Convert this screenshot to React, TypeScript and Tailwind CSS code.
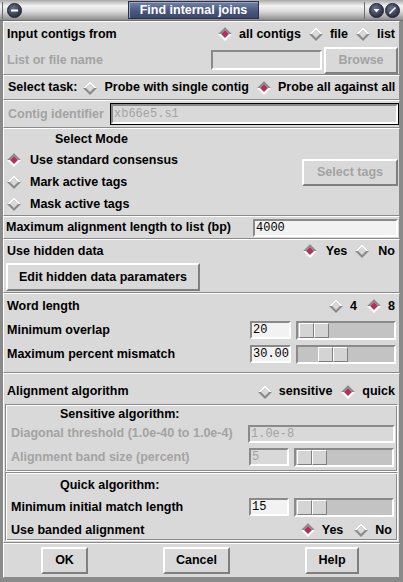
import React from "react";

const raised = "border border-t-white border-l-white border-b-[#8a8a8a] border-r-[#8a8a8a]";
const groove = "border border-t-[#8a8a8a] border-l-[#8a8a8a] border-b-white border-r-white shadow-[inset_1px_1px_0_#fff,inset_-1px_-1px_0_#8a8a8a]";
const sunken = "border-2 border-t-[#8a8a8a] border-l-[#8a8a8a] border-b-white border-r-white";
const btnRaised = "border-2 border-t-white border-l-white border-b-[#7f7f7f] border-r-[#7f7f7f]";

function Diamond({ on }: { on: boolean }) {
  const top = on ? "#8a8a8a" : "#ffffff";
  const bottom = on ? "#ffffff" : "#8a8a8a";
  const center = on ? "#b03060" : "#d9d9d9";
  return (
    <svg width="14" height="14" viewBox="0 0 14 14" className="shrink-0">
      <polygon points="7,0 14,7 7,14 0,7" fill={bottom} />
      <polygon points="0,7 7,0 14,7 11,7 7,3 3,7" fill={top} />
      <polygon points="7,3 11,7 7,11 3,7" fill={center} />
    </svg>
  );
}

function Radio({ on, label, className = "" }: { on: boolean; label: string; className?: string }) {
  return (
    <div className={`flex items-center gap-[7px] ${className}`}>
      <Diamond on={on} />
      <span>{label}</span>
    </div>
  );
}

function Slider({ offsetClass }: { offsetClass: string }) {
  return (
    <div className={`${sunken} w-[100px] h-[19px] bg-[#c3c3c3] flex items-stretch`}>
      <div className={`${offsetClass} flex`}>
        <div className="w-[15px] border border-t-white border-l-white border-b-[#7f7f7f] border-r-[#7f7f7f] bg-[#d4d4d4]" />
        <div className="w-[15px] border border-t-white border-l-white border-b-[#7f7f7f] border-r-[#7f7f7f] bg-[#d4d4d4]" />
      </div>
    </div>
  );
}

function Entry({ w, value, disabled, light }: { w: string; value: string; disabled?: boolean; light?: boolean }) {
  return (
    <div
      className={`${sunken} ${w} h-[18px] flex items-center pl-[1px] font-['Liberation_Mono',monospace] text-[12px] font-normal ${
        light ? "bg-[#f2f2f2]" : "bg-[#d9d9d9]"
      } ${disabled ? "text-[#a3a3a3]" : "text-black"}`}
    >
      {value}
    </div>
  );
}

function CircleBtn({ kind }: { kind: "min" | "down" | "edit" }) {
  return (
    <div className="w-[15px] h-[15px] rounded-full bg-[radial-gradient(circle_at_40%_35%,#6a7390,#2e3548_70%)] border border-[#1b1f2b] flex items-center justify-center">
      <svg width="9" height="9" viewBox="0 0 9 9">
        {kind === "min" && <rect x="1" y="3.5" width="7" height="2" fill="#fff" />}
        {kind === "down" && <polygon points="1.5,3 7.5,3 4.5,6.5" fill="#fff" />}
        {kind === "edit" && <line x1="1.5" y1="7.5" x2="7.5" y2="1.5" stroke="#fff" strokeWidth="1.6" />}
      </svg>
    </div>
  );
}

export default function App() {
  return (
    <div className="w-[403px] h-[582px] flex flex-col font-['Liberation_Sans',Arial,sans-serif] text-[12.5px] font-bold text-black bg-[#888888] overflow-hidden">
      {/* Title bar */}
      <div className="h-[21px] shrink-0 flex items-center bg-[linear-gradient(to_bottom,#a9a9a9,#f4f4f4_30%,#d6d6d6_60%,#8c8c8c)] border-b border-[#707070]">
        <div className="ml-[2px] w-[1px] h-[17px] bg-[#6c6c6c]" />
        <div className="ml-[4px]">
          <CircleBtn kind="min" />
        </div>
        <div className="ml-[106px] w-[131px] h-[18px] self-start mt-[1px] border border-[#2a3148] bg-[linear-gradient(to_bottom,#7383a8,#4a587d_55%,#3c4869)] shadow-[inset_1px_1px_0_#9aa6c4] flex items-center justify-center text-white text-[12.5px] font-bold">
          Find internal joins
        </div>
        <div className="ml-auto mr-[3px] flex items-center gap-[1px]">
          <div className="w-[1px] h-[17px] bg-[#6c6c6c] mr-[3px]" />
          <CircleBtn kind="down" />
          <CircleBtn kind="edit" />
        </div>
      </div>

      {/* Body */}
      <div className="flex-1 flex flex-col border-x-[3px] border-b-[4px] border-[#8a8a8a] bg-[#d9d9d9]">
        {/* S1 */}
        <div className={`${raised} h-[54px] flex flex-col`}>
          <div className="h-[24px] flex items-center pl-[3px] pr-[4px]">
            <span>Input contigs from</span>
            <div className="ml-auto flex items-center">
              <Radio on label="all contigs" />
              <Radio on={false} label="file" className="ml-[8px]" />
              <Radio on={false} label="list" className="ml-[8px]" />
            </div>
          </div>
          <div className="h-[28px] flex items-center pl-[3px] pr-[1px]">
            <span className="text-[#a3a3a3]">List or file name</span>
            <div className={`${sunken} ml-auto w-[111px] h-[20px] bg-[#d9d9d9]`} />
            <div className={`${btnRaised} ml-[2px] w-[74px] h-[27px] flex items-center justify-center text-[#a3a3a3]`}>
              Browse
            </div>
          </div>
        </div>

        {/* S2 */}
        <div className={`${raised} h-[25px] flex items-center pl-[4px]`}>
          <span>Select task:</span>
          <Radio on={false} label="Probe with single contig" className="ml-[6px]" />
          <Radio on label="Probe all against all" className="ml-[8px]" />
        </div>

        {/* S3 */}
        <div className={`${raised} h-[28px] flex items-center pl-[4px] pr-[0px]`}>
          <span className="text-[#a3a3a3]">Contig identifier</span>
          <div className="ml-auto w-[289px] h-[22px] border border-black">
            <div className="w-full h-full border-2 border-t-[#8a8a8a] border-l-[#8a8a8a] border-b-white border-r-white bg-[#d9d9d9] flex items-center pl-[1px] font-['Liberation_Mono',monospace] font-normal text-[12px] text-[#a3a3a3]">
              xb66e5.s1
            </div>
          </div>
        </div>

        {/* S4 */}
        <div className={`${raised} h-[88px] flex`}>
          <div className="flex flex-col">
            <div className="h-[20px] flex items-center pl-[51px]">Select Mode</div>
            <div className="h-[22px] flex items-center pl-[3px]">
              <Radio on label="Use standard consensus" className="gap-[9px]" />
            </div>
            <div className="h-[22px] flex items-center pl-[3px]">
              <Radio on={false} label="Mark active tags" className="gap-[9px]" />
            </div>
            <div className="h-[22px] flex items-center pl-[3px]">
              <Radio on={false} label="Mask active tags" className="gap-[9px]" />
            </div>
          </div>
          <div className="ml-auto mr-[1px] self-center">
            <div className={`${btnRaised} w-[96px] h-[27px] flex items-center justify-center text-[#a3a3a3]`}>
              Select tags
            </div>
          </div>
        </div>

        {/* S5 */}
        <div className={`${raised} h-[23px] flex items-center pl-[2px] pr-[1px]`}>
          <span>Maximum alignment length to list (bp)</span>
          <div className="ml-auto">
            <Entry w="w-[145px]" value="4000" light />
          </div>
        </div>

        {/* S6 */}
        <div className={`${raised} h-[54px] flex flex-col`}>
          <div className="h-[22px] flex items-center pl-[3px] pr-[4px]">
            <span>Use hidden data</span>
            <div className="ml-auto flex items-center">
              <Radio on label="Yes" className="gap-[9px]" />
              <Radio on={false} label="No" className="ml-[8px] gap-[9px]" />
            </div>
          </div>
          <div className="pl-[2px] pt-[1px]">
            <div className={`${btnRaised} w-[194px] h-[28px] flex items-center justify-center`}>
              Edit hidden data paramaters
            </div>
          </div>
        </div>

        {/* S7 */}
        <div className={`${raised} h-[80px] flex flex-col`}>
          <div className="h-[24px] flex items-center pl-[3px] pr-[4px]">
            <span>Word length</span>
            <div className="ml-auto flex items-center">
              <Radio on={false} label="4" />
              <Radio on label="8" className="ml-[10px]" />
            </div>
          </div>
          <div className="h-[24px] flex items-center pl-[3px] pr-[3px]">
            <span>Minimum overlap</span>
            <div className="ml-auto flex items-center gap-[5px]">
              <Entry w="w-[41px]" value="20" light />
              <Slider offsetClass="ml-[1px]" />
            </div>
          </div>
          <div className="h-[24px] flex items-center pl-[3px] pr-[3px]">
            <span>Maximum percent mismatch</span>
            <div className="ml-auto flex items-center gap-[5px]">
              <Entry w="w-[41px]" value="30.00" light />
              <Slider offsetClass="ml-[20px]" />
            </div>
          </div>
        </div>

        {/* S8 */}
        <div className={`${raised} h-[170px] flex flex-col`}>
          <div className="h-[30px] flex items-center pt-[5px] pl-[3px] pr-[4px]">
            <span>Alignment algorithm</span>
            <div className="ml-auto flex items-center">
              <Radio on={false} label="sensitive" />
              <Radio on label="quick" className="ml-[9px]" />
            </div>
          </div>
          <div className={`${groove} mx-[1px] h-[68px] flex flex-col p-[1px]`}>
            <div className="h-[16px] flex items-center pl-[53px]">Sensitive algorithm:</div>
            <div className="h-[23px] flex items-center pl-[4px] pr-[1px] text-[#a3a3a3]">
              <span>Diagonal threshold (1.0e-40 to 1.0e-4)</span>
              <div className="ml-auto">
                <Entry w="w-[147px]" value="1.0e-8" disabled />
              </div>
            </div>
            <div className="h-[24px] flex items-center pl-[4px] pr-[2px] text-[#a3a3a3]">
              <span>Alignment band size (percent)</span>
              <div className="ml-auto flex items-center gap-[5px]">
                <Entry w="w-[40px]" value="5" disabled />
                <Slider offsetClass="ml-[1px]" />
              </div>
            </div>
          </div>
          <div className={`${groove} mx-[1px] h-[69px] flex flex-col p-[1px]`}>
            <div className="h-[22px] flex items-center pt-[1px] pl-[53px]">Quick algorithm:</div>
            <div className="h-[22px] flex items-center pl-[4px] pr-[2px]">
              <span>Minimum initial match length</span>
              <div className="ml-auto flex items-center gap-[5px]">
                <Entry w="w-[40px]" value="15" light />
                <Slider offsetClass="ml-[1px]" />
              </div>
            </div>
            <div className="h-[21px] flex items-center pt-[3px] pl-[4px] pr-[4px]">
              <span>Use banded alignment</span>
              <div className="ml-auto flex items-center">
                <Radio on label="Yes" />
                <Radio on={false} label="No" className="ml-[11px]" />
              </div>
            </div>
          </div>
        </div>

        {/* S9 */}
        <div className={`${raised} flex-1 flex items-center`}>
          <div className={`${btnRaised} ml-[37px] w-[47px] h-[27px] flex items-center justify-center`}>OK</div>
          <div className={`${btnRaised} ml-[75px] w-[67px] h-[27px] flex items-center justify-center`}>Cancel</div>
          <div className={`${btnRaised} ml-[75px] w-[54px] h-[27px] flex items-center justify-center`}>Help</div>
        </div>
      </div>
    </div>
  );
}
